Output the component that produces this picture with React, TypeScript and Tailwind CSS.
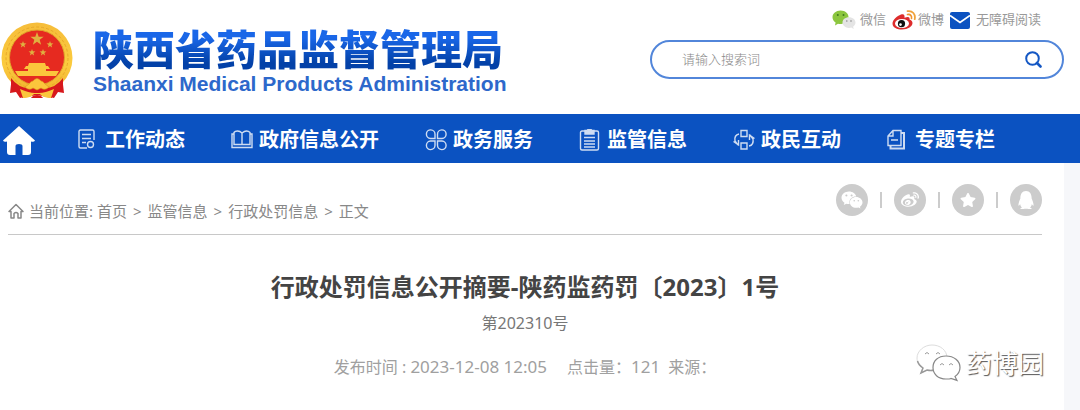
import { useState } from "react";
import { FaQq, FaStar, FaWeibo, FaWeixin } from "react-icons/fa";

const STAR = "M0 -10L2.4 -3.2L9.5 -3.1L3.8 1.2L5.9 8.1L0 4L-5.9 8.1L-3.8 1.2L-9.5 -3.1L-2.4 -3.2Z";

function Emblem() {
  return (
    <svg viewBox="0 0 72 77" className="h-[77px] w-[72px] shrink-0" role="img" aria-label="国徽">
      <defs>
        <linearGradient id="ring" x1="0" y1="0" x2="0" y2="1">
          <stop offset="0%" stopColor="#f6bd3a" />
          <stop offset="60%" stopColor="#fbcb3e" />
          <stop offset="100%" stopColor="#f0b02c" />
        </linearGradient>
      </defs>
      <path d="M11 54L9 71L15 70L19 76L36 72L53 76L57 70L63 71L61 54Z" fill="#d7181c" />
      <circle cx="36" cy="36" r="35.5" fill="url(#ring)" />
      <circle cx="36" cy="36" r="31" fill="none" stroke="#e8a82a" strokeWidth="1" strokeDasharray="3 2" />
      <circle cx="36" cy="35.500" r="27.500" fill="#e62a20" stroke="#dfa42b" strokeWidth="1" />
      <g fill="#e0b040">
        <path d={STAR} transform="translate(36 17) scale(.7)" />
        <path d={STAR} transform="translate(22 22.500) scale(.36)" />
        <path d={STAR} transform="translate(49 22.500) scale(.36)" />
        <path d={STAR} transform="translate(31 30.500) scale(.36)" />
        <path d={STAR} transform="translate(42 30.500) scale(.36)" />
      </g>
      <g fill="#fbc63c">
        <path d="M28 41h16l1 3h-18z" />
        <path d="M25 44h22l2 3h-26z" />
        <path d="M27 46h18v3h-18z" />
        <path d="M14 49h44l-3 5h-38z" />
      </g>
      <path d="M10 56Q18 67 30 66L36 64L42 66Q54 67 62 56L62 67Q56 72 50 68L51 76L36 73L21 76L22 68Q16 72 10 67Z" fill="#d7181c" />
      <path d="M28 62q2-3 4-3q4-5 8 0q2 0 4 3l4 3q-4 4-8 1l-4 2-4-2q-4 3-8-1z" fill="#fbc63c" stroke="#d99a1c" strokeWidth=".6" />
      <path d="M19 67q9 4 15 4h4q6 0 15-4l-3 9q-8 0-11-4h-6q-3 4-11 4z" fill="#fbc63c" />
      <path d="M30 76q2-3 6-3t6 3z" fill="#d7181c" />
    </svg>
  );
}

function WechatColor() {
  return (
    <svg viewBox="0 0 24 20" className="h-5 w-6">
      <path d="M8.500 0.500C4 .5.500 3.500.500 7.200c0 2.200 1.200 4 3.100 5.300L3 15.500l3-1.700c4 1 10-1 10.500-6C17 4 13.500.5 8.500.5z" fill="#8cc63f" />
      <circle cx="5.800" cy="5" r="1" fill="#3f7a1d" />
      <circle cx="11.500" cy="5" r="1" fill="#3f7a1d" />
      <path d="M17 7.200c-4 0-6.500 2.400-6.500 5.400s3 5.400 6.500 5.400c.8 0 1.600-.1 2.300-.4l2.400 1.400-.6-2.300c1.400-1 2.400-2.400 2.400-4.100 0-3-2.800-5.400-6.500-5.400z" fill="#e4e4e4" />
      <circle cx="14.800" cy="11" r=".8" fill="#888" />
      <circle cx="19" cy="11" r=".8" fill="#888" />
    </svg>
  );
}

function WeiboColor() {
  return (
    <svg viewBox="0 0 24 20" className="h-5 w-6" fill="none">
      <path d="M9 4.500C5 6 .5 10 .5 13.500c0 4 4.500 6 9.500 6 6 0 10.500-3 10.500-6.500 0-2-1.500-3-3-3.500.5-2-.5-3.500-5-1.800C12.800 5 12 3.500 9 4.500z" fill="#dd2c2c" />
      <ellipse cx="10" cy="13.500" rx="7" ry="4.600" fill="#fff" />
      <circle cx="9.500" cy="13.700" r="3.600" fill="#111" />
      <circle cx="8.500" cy="14.600" r="1.300" fill="#fff" />
      <path d="M15.500 4.500c3-.5 4.500 1.500 4 4" stroke="#f0932b" strokeWidth="1.600" strokeLinecap="round" />
      <path d="M15.500 1.200c5-.8 8.300 3 7.200 8" stroke="#f0a33b" strokeWidth="1.800" strokeLinecap="round" />
    </svg>
  );
}

function MailColor() {
  return (
    <svg viewBox="0 0 20 17" className="h-[17px] w-5">
      <rect width="20" height="17" rx="2" fill="#0b52c1" />
      <path d="M0 3.500L10 10.500L20 3.500" fill="none" stroke="#fff" strokeWidth="1.800" />
    </svg>
  );
}

const navItems = [
  {
    label: "工作动态",
    icon: (
      <>
        <path d="M10 19H3.500Q2 19 2 17.500V2.500Q2 1 3.500 1H15.500Q17 1 17 2.500V11" />
        <path d="M5 5.500H14M5 9.500H14M5 13.500H9" />
        <circle cx="13.500" cy="15.500" r="3" />
      </>
    ),
  },
  {
    label: "政府信息公开",
    icon: (
      <>
        <path d="M11 4Q9 2 6.500 2T3 3.500V15.500H19V3.500Q17.500 2 15.500 2T11 4V15.500" />
        <path d="M3 5H1V18.500H21V5H19" />
      </>
    ),
  },
  {
    label: "政务服务",
    icon: (
      <>
        <path d="M10 9.500H5.500A4.300 4.300 0 1 1 10 5.200ZM12.500 9.500H17A4.300 4.300 0 1 0 12.500 5.200Z" />
        <path d="M10 12H5.500A4.300 4.300 0 1 0 10 16.300ZM12.500 12H17A4.300 4.300 0 1 1 12.500 16.300Z" />
      </>
    ),
  },
  {
    label: "监管信息",
    icon: (
      <>
        <path d="M6 2H3Q1.500 2 1.500 3.500V19.500Q1.500 21 3 21H18Q19.500 21 19.500 19.500V3.500Q19.500 2 18 2H15" />
        <path d="M6 1.500H8Q10.500 -1.500 13 1.500H15V5H6z" fill="currentColor" />
        <path d="M5 8.500H16M5 12H16M5 15H16M5 18H16" />
      </>
    ),
  },
  {
    label: "政民互动",
    icon: (
      <>
        <path d="M8 1.500h6v6h-6zM8 14h6v6h-6z" />
        <path d="M6 5Q1 6 2 12l3 4M.5 12.500l5 3.500V11M16 17q5-1 4-7l-3-4M21.500 9.500L16.500 6V11" />
      </>
    ),
  },
  {
    label: "专题专栏",
    icon: (
      <>
        <path d="M6 1.500H14V16.500H1V7ZM6 1.500V7H1M4 11H11" />
        <path d="M14 4H17V19.500H3.500V17" strokeWidth="2" />
      </>
    ),
  },
];

const crumbs = ["首页", "监管信息", "行政处罚信息"];

const shares = [
  { label: "微信", icon: <FaWeixin className="size-[22px]" /> },
  { label: "微博", icon: <FaWeibo className="size-[18px]" /> },
  { label: "收藏", icon: <FaStar className="size-4" /> },
  { label: "QQ", icon: <FaQq className="size-[18px]" /> },
];

export default function App() {
  const [keyword, setKeyword] = useState("");

  return (
    <div className="min-h-screen bg-[#f6f7fa] font-['Noto_Sans','Noto_Sans_CJK_SC',sans-serif]">
      <header className="flex h-[114px] items-start justify-between bg-white pr-4">
        <a href="#" className="flex items-start gap-5 pt-[22px] pl-px">
          <Emblem />
          <div className="pt-1 whitespace-nowrap">
            <h1 className="bg-linear-to-b from-[#1a67e8] from-25% to-[#0341a8] to-80% bg-clip-text text-[41px] leading-[46px] font-black text-transparent">
              陕西省药品监督管理局
            </h1>
            <p className="font-['Liberation_Sans',sans-serif] text-[21px] leading-6 font-bold text-[#2d68cb]">
              Shaanxi Medical Products Administration
            </p>
          </div>
        </a>

        <div className="w-[414px] shrink-0">
          <div className="flex h-10 items-center justify-end pr-[23px] text-[13px] text-[#999]">
            <a href="#" className="flex items-center gap-1"><WechatColor />微信</a>
            <a href="#" className="ml-[6px] flex items-center gap-[2px]"><WeiboColor />微博</a>
            <a href="#" className="ml-[6px] flex items-center gap-[6px]"><MailColor />无障碍阅读</a>
          </div>
          <form
            onSubmit={(e) => e.preventDefault()}
            className="flex h-[39px] items-center rounded-full border-2 border-[#5286da] pr-5 pl-[30px]"
          >
            <input
              type="text"
              aria-label="搜索"
              value={keyword}
              onChange={(e) => setKeyword(e.target.value)}
              placeholder="请输入搜索词"
              className="min-w-0 flex-1 text-[13px] font-light text-[#555] outline-none placeholder:text-[#888]"
            />
            <button type="submit" aria-label="搜索" className="text-[#1457c4]">
              <svg viewBox="0 0 17 17" className="size-[17px]" fill="none" stroke="currentColor">
                <circle cx="7.500" cy="7.500" r="6.300" strokeWidth="2" />
                <path d="M12 12L15.500 15.500" strokeWidth="2.600" strokeLinecap="round" />
              </svg>
            </button>
          </form>
        </div>
      </header>

      <nav className="flex h-[49px] items-center bg-[#0b52c1] pt-[2px] pl-[3px] text-white">
        <a href="#" aria-label="首页" className="mr-[42px] pt-px">
          <svg viewBox="0 0 32 29" className="h-[29px] w-8" fill="currentColor">
            <path d="M16 0L32 14.500Q31 16.500 28 15.500V26Q28 29 25 29H19.500V20Q19.500 18 16 18T12.500 20V29H7Q4 29 4 26V15.500Q1 16.500 0 14.500Z" />
          </svg>
        </a>
        <ul className="flex gap-[46px]">
          {navItems.map((item) => (
            <li key={item.label}>
              <a href="#" className="flex items-center text-xl font-bold whitespace-nowrap hover:text-blue-100">
                <span className="w-7">
                  <svg viewBox="0 0 22 22" className="size-[22px]" fill="none" stroke="currentColor" strokeWidth="1.400" opacity=".8">
                    {item.icon}
                  </svg>
                </span>
                {item.label}
              </a>
            </li>
          ))}
        </ul>
      </nav>

      <main className="relative mr-4 min-h-[247px] bg-white pr-[22px] pl-2">
        <div className="flex h-[72px] items-start justify-between border-b border-[#c8c8c8] pt-[21px]">
          <div className="flex items-center gap-[5px] pt-[15px] text-[15px] leading-6 text-[#888]">
            <svg viewBox="0 0 16 16" className="size-4" fill="none" stroke="currentColor" strokeWidth="1.500" strokeLinejoin="round">
              <path d="M1 8.500L8 1.500L15 8.500H13V15H10V10.500Q8 8.500 6 10.500V15H3V8.500Z" />
            </svg>
            <p>
              当前位置:{" "}
              {crumbs.map((c) => (
                <span key={c}>
                  <a href="#" className="hover:text-blue-700">{c}</a>
                  <span className="mx-[6px]">&gt;</span>
                </span>
              ))}
              正文
            </p>
          </div>
          <ul className="flex items-center gap-3">
            {shares.map((s, i) => (
              <li key={s.label} className="flex items-center gap-3">
                {i > 0 && <span className="h-4 w-[2px] bg-[#ccc]"></span>}
                <button aria-label={s.label} className="flex size-8 items-center justify-center rounded-full bg-[#ccc] text-white">
                  {s.icon}
                </button>
              </li>
            ))}
          </ul>
        </div>

        <article className="pt-[34px] text-center">
          <h2 className="text-2xl leading-9 font-bold text-[#444]">行政处罚信息公开摘要-陕药监药罚〔2023〕1号</h2>
          <p className="mt-[6px] text-base leading-6 text-[#777]">第202310号</p>
          <p className="mt-5 flex items-baseline justify-center text-base leading-6 text-[#a0a0a0]">
            <span className="mr-5">发布时间 : <span className="text-[17px]">2023-12-08 12:05</span></span>
            <span className="mr-2">点击量：<span className="text-[17px]">121</span></span>
            <span>来源：</span>
          </p>
        </article>

        <div className="absolute right-5 bottom-7 flex items-center gap-1 text-white">
          <svg viewBox="0 0 46 38" className="h-[38px] w-[46px]" fill="#fff" stroke="#999" strokeWidth="1">
            <path d="M16 1C8 1 1 7 1 14c0 4 2 7 6 10l-2 5 6-3c14 3 20-4 20-12S24 1 16 1z" stroke="#ddd" />
            <path d="M1.500 17q1 4 5.500 7l-2 5 6-3q4 1 7 0" stroke="#999" strokeWidth="1.500" />
            <path d="M30 12c-8 0-13 5-13 11.500S22 35 30 35c2 0 4 0 5-.6l6 2-2-4c3-2 5-5 5-8.900C44 17 38 12 30 12z" stroke="#888" strokeWidth="1.200" />
            <path d="M9 10q2-3 4 0M20 10q2-3 4 0M24 21q2-3 4 0M33 21q2-3 4 0" fill="none" />
          </svg>
          <span className="text-[26px] leading-9 [text-shadow:1px_1px_1px_#555]">药博园</span>
        </div>
      </main>
    </div>
  );
}
